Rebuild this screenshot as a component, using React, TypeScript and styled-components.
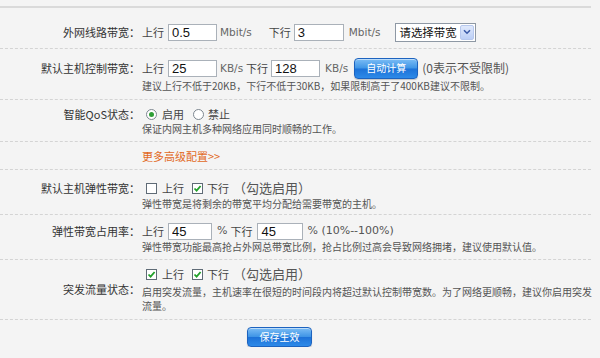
import React from "react";
import styled, { createGlobalStyle } from "styled-components";

const CJK = `"Noto Sans CJK SC", "Liberation Sans", sans-serif`;

const GlobalStyle = createGlobalStyle`
  html, body { margin: 0; padding: 0; background: #f4f4f4; }
  body { font-family: ${CJK}; color: #444; }
  * { box-sizing: border-box; }
`;

const Page = styled.div`
  width: 591px;
  padding-top: 6px;
`;

const Panel = styled.div`
  border-top: 2px solid #dadada;
`;

const Row = styled.div<{ $pt: number; $pb: number; $center?: boolean }>`
  display: grid;
  grid-template-columns: 140px 1fr;
  column-gap: 2px;
  align-items: ${(p) => (p.$center ? "center" : "start")};
  padding: ${(p) => p.$pt}px 0 ${(p) => p.$pb}px;
  border-bottom: 1px dashed #d4d4d4;
`;

const Label = styled.div<{ $h: number }>`
  text-align: right;
  font-size: 11px;
  line-height: ${(p) => p.$h}px;
  color: #333;
  white-space: nowrap;
`;

const Content = styled.div`
  display: flex;
  flex-direction: column;
`;

const Line = styled.div<{ $h: number }>`
  display: flex;
  align-items: center;
  height: ${(p) => p.$h}px;
  font-size: 11px;
  line-height: ${(p) => p.$h}px;
  color: #444;
  white-space: nowrap;
`;

const Word = styled.span<{ $ml?: number }>`
  margin-left: ${(p) => p.$ml ?? 0}px;
`;

const Unit = styled.span<{ $ml?: number }>`
  margin-left: ${(p) => p.$ml ?? 0}px;
  font-family: "DejaVu Sans", sans-serif;
  font-size: 10.5px;
  color: #666;
`;

const Note = styled.span<{ $ml?: number; $size?: number }>`
  margin-left: ${(p) => p.$ml ?? 0}px;
  font-size: ${(p) => p.$size ?? 12}px;
  color: #555;
`;

const Percent = styled.span<{ $ml?: number }>`
  margin-left: ${(p) => p.$ml ?? 0}px;
  font-family: "DejaVu Sans", sans-serif;
  font-size: 11px;
  color: #555;
`;

const Field = styled.input<{ $w: number; $ml?: number }>`
  width: ${(p) => p.$w}px;
  height: 17px;
  margin: 0 0 0 ${(p) => p.$ml ?? 0}px;
  padding: 0 3px;
  border: 1px solid #aab1b9;
  background: #fff;
  font-family: "Liberation Sans", Arial, sans-serif;
  font-size: 13px;
  color: #111;
  outline: none;
`;

const Select = styled.div<{ $ml?: number }>`
  display: flex;
  align-items: center;
  width: 81px;
  height: 19px;
  margin-left: ${(p) => p.$ml ?? 0}px;
  border: 1px solid #8e98a4;
  background: #fff;
`;

const SelectText = styled.span`
  flex: 1;
  padding-left: 4px;
  font-size: 11.4px;
  color: #111;
  white-space: nowrap;
  overflow: hidden;
`;

const SelectArrow = styled.span`
  display: flex;
  align-items: center;
  justify-content: center;
  flex: none;
  width: 14px;
  height: 15px;
  margin-right: 1px;
  border: 1px solid #b7c8ee;
  border-radius: 2px;
  background: linear-gradient(#e0e9fc, #bccff6);
`;

const BlueButton = styled.button<{ $w: number; $h: number; $ml?: number }>`
  width: ${(p) => p.$w}px;
  height: ${(p) => p.$h}px;
  margin: 0 0 0 ${(p) => p.$ml ?? 0}px;
  padding: 0;
  border: 1px solid #1d63bf;
  border-radius: 4px;
  background: linear-gradient(#7cbdf5 0%, #3f95e6 48%, #1d72d8 52%, #2d8ae8 100%);
  box-shadow: inset 0 1px 0 rgba(255, 255, 255, 0.5), 0 1px 1px rgba(0, 0, 0, 0.2);
  color: #fff;
  font-family: ${CJK};
  font-size: 10px;
  line-height: 1;
  cursor: pointer;
`;

const Radio = styled.span<{ $on?: boolean; $ml?: number }>`
  position: relative;
  display: inline-block;
  flex: none;
  width: 11px;
  height: 11px;
  margin-left: ${(p) => p.$ml ?? 0}px;
  border: 1px solid #7d8790;
  border-radius: 50%;
  background: #fff;
  &::after {
    content: "";
    display: ${(p) => (p.$on ? "block" : "none")};
    position: absolute;
    left: 2px;
    top: 2px;
    width: 5px;
    height: 5px;
    border-radius: 50%;
    background: #2f9e36;
  }
`;

const Check = styled.span<{ $ml?: number }>`
  display: inline-flex;
  align-items: center;
  justify-content: center;
  flex: none;
  width: 11px;
  height: 11px;
  margin-left: ${(p) => p.$ml ?? 0}px;
  border: 1px solid #5f6b76;
  background: #fff;
`;

const Hint = styled.div<{ $mt?: number }>`
  margin-top: ${(p) => p.$mt ?? 0}px;
  font-size: 10px;
  line-height: 14px;
  color: #555;
  white-space: nowrap;
`;

const MoreLink = styled.a`
  font-size: 11px;
  line-height: 14px;
  color: #e2691e;
  text-decoration: none;
`;

const Footer = styled.div`
  display: flex;
  padding: 7px 0 0 247px;
`;

const Tick = () => (
  <svg width="9" height="9" viewBox="0 0 9 9">
    <path d="M1.5 4.5 L3.6 6.7 L7.6 2" fill="none" stroke="#21a02a" strokeWidth="1.8" />
  </svg>
);

const Box = ({ on, ml }: { on?: boolean; ml?: number }) => (
  <Check $ml={ml}>{on ? <Tick /> : null}</Check>
);

const Chevron = () => (
  <svg width="8" height="6" viewBox="0 0 8 6">
    <path d="M1 1.2 L4 4.2 L7 1.2" fill="none" stroke="#3a5aa8" strokeWidth="1.6" />
  </svg>
);

export default function App() {
  return (
    <>
      <GlobalStyle />
      <Page>
        <Panel>
          <Row $pt={14} $pb={6}>
            <Label $h={20}>外网线路带宽：</Label>
            <Content>
              <Line $h={20}>
                <Word>上行</Word>
                <Field $w={49} $ml={4} defaultValue="0.5" />
                <Unit $ml={3}>Mbit/s</Unit>
                <Word $ml={17}>下行</Word>
                <Field $w={50} $ml={3} defaultValue="3" />
                <Unit $ml={5}>Mbit/s</Unit>
                <Select $ml={14}>
                  <SelectText>请选择带宽</SelectText>
                  <SelectArrow>
                    <Chevron />
                  </SelectArrow>
                </Select>
              </Line>
            </Content>
          </Row>

          <Row $pt={8} $pb={6}>
            <Label $h={22}>默认主机控制带宽：</Label>
            <Content>
              <Line $h={22}>
                <Word>上行</Word>
                <Field $w={49} $ml={4} defaultValue="25" />
                <Unit $ml={3}>KB/s</Unit>
                <Word $ml={3}>下行</Word>
                <Field $w={49} $ml={3} defaultValue="128" />
                <Unit $ml={5}>KB/s</Unit>
                <BlueButton $w={64} $h={21} $ml={6}>
                  自动计算
                </BlueButton>
                <Note $ml={4}>(0表示不受限制)</Note>
              </Line>
              <Hint>建议上行不低于20KB，下行不低于30KB，如果限制高于了400KB建议不限制。</Hint>
            </Content>
          </Row>

          <Row $pt={6} $pb={5}>
            <Label $h={16}>智能QoS状态：</Label>
            <Content>
              <Line $h={16}>
                <Radio $on $ml={4} />
                <Word $ml={5}>启用</Word>
                <Radio $ml={9} />
                <Word $ml={4}>禁止</Word>
              </Line>
              <Hint>保证内网主机多种网络应用同时顺畅的工作。</Hint>
            </Content>
          </Row>

          <Row $pt={7} $pb={6}>
            <div />
            <Content>
              <Line $h={14}>
                <MoreLink href="#">更多高级配置&gt;&gt;</MoreLink>
              </Line>
            </Content>
          </Row>

          <Row $pt={9} $pb={3}>
            <Label $h={18}>默认主机弹性带宽：</Label>
            <Content>
              <Line $h={18}>
                <Box ml={4} />
                <Word $ml={5}>上行</Word>
                <Box on ml={8} />
                <Word $ml={4}>下行</Word>
                <Note $ml={4} $size={13}>（勾选启用）</Note>
              </Line>
              <Hint>弹性带宽是将剩余的带宽平均分配给需要带宽的主机。</Hint>
            </Content>
          </Row>

          <Row $pt={7} $pb={5}>
            <Label $h={18}>弹性带宽占用率：</Label>
            <Content>
              <Line $h={18}>
                <Word>上行</Word>
                <Field $w={44} $ml={4} defaultValue="45" />
                <Percent $ml={5}>%</Percent>
                <Word $ml={3}>下行</Word>
                <Field $w={46} $ml={5} defaultValue="45" />
                <Percent $ml={4}>% (10%--100%)</Percent>
              </Line>
              <Hint>弹性带宽功能最高抢占外网总带宽比例，抢占比例过高会导致网络拥堵，建议使用默认值。</Hint>
            </Content>
          </Row>

          <Row $pt={5} $pb={6} $center>
            <Label $h={16}>突发流量状态：</Label>
            <Content>
              <Line $h={18}>
                <Box on ml={4} />
                <Word $ml={5}>上行</Word>
                <Box on ml={8} />
                <Word $ml={4}>下行</Word>
                <Note $ml={4} $size={13}>（勾选启用）</Note>
              </Line>
              <Hint $mt={2}>
                启用突发流量，主机速率在很短的时间段内将超过默认控制带宽数。为了网络更顺畅，建议你启用突发
                <br />
                流量。
              </Hint>
            </Content>
          </Row>

          <Footer>
            <BlueButton $w={65} $h={20}>
              保存生效
            </BlueButton>
          </Footer>
        </Panel>
      </Page>
    </>
  );
}
